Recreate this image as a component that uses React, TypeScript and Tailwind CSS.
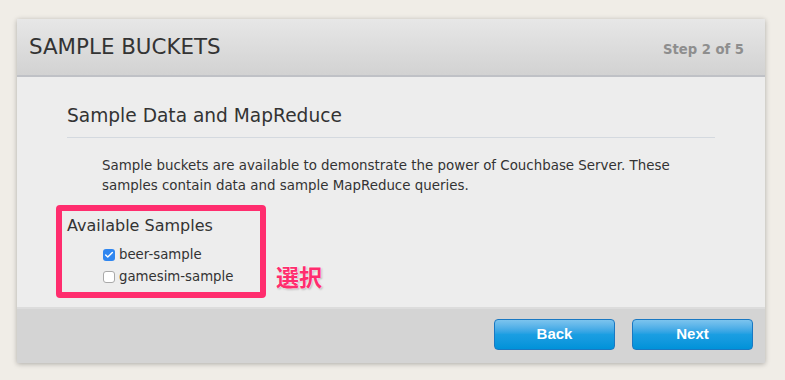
import { Check } from "lucide-react";

const font = { fontFamily: '"DejaVu Sans", Verdana, sans-serif' };

function Box({ checked }: { checked?: boolean }) {
  if (checked) {
    return (
      <span className="flex h-[12px] w-[12px] items-center justify-center rounded-[3px] bg-[#2f86f0]">
        <Check size={10} strokeWidth={3.5} className="text-white" />
      </span>
    );
  }
  return <span className="h-[12px] w-[12px] rounded-[3px] border border-[#a9a9a9] bg-white" />;
}

function Btn({ label }: { label: string }) {
  return (
    <button
      className="h-[31px] w-[121px] rounded-[4px] border border-[#1a78c2] bg-gradient-to-b from-[#7cc4ee] via-[#1a9ee2] to-[#0092d9] text-[15px] font-bold text-white"
      style={{ fontFamily: '"Liberation Sans", Arial, sans-serif' }}
    >
      {label}
    </button>
  );
}

export default function App() {
  return (
    <div className="h-[380px] w-[785px] bg-[#f0ede7] pl-[17px] pt-[19px]" style={font}>
      <div className="relative flex h-[344px] w-[748px] flex-col bg-[#ededed] shadow-[0_1px_5px_rgba(0,0,0,0.28)]">
        <div className="flex h-[58px] items-center justify-between border-b-2 border-[#bfc1c6] bg-gradient-to-b from-[#e7e7e7] to-[#d2d2d2] pl-[12px] pr-[21px]">
          <h1 className="pt-[1px] text-[21.4px] text-[#333]">SAMPLE BUCKETS</h1>
          <span className="pt-[5px] text-[13.2px] font-bold text-[#8e8e8e]">Step 2 of 5</span>
        </div>

        <div className="flex-1 px-[50px] pt-[25px]">
          <h2 className="border-b border-[#d4d9df] pb-[7px] text-[18.6px] text-[#333]">Sample Data and MapReduce</h2>
          <p className="mt-[18px] w-[610px] pl-[35px] text-[13.4px] leading-[20px] text-[#333]">
            Sample buckets are available to demonstrate the power of Couchbase Server. These samples contain data and
            sample MapReduce queries.
          </p>
          <h3 className="mt-[18px] text-[16px] text-[#333]">Available Samples</h3>
          <ul className="mt-[9px] flex flex-col gap-[6px] pl-[36px] text-[13.3px] text-[#333]">
            <li className="flex h-[16px] items-center gap-[4px]">
              <Box checked />
              beer-sample
            </li>
            <li className="flex h-[16px] items-center gap-[4px]">
              <Box />
              gamesim-sample
            </li>
          </ul>
        </div>

        <div className="flex h-[56px] items-center justify-end gap-[17px] border-t-2 border-[#dcdcdc] bg-[#d4d4d4] pb-[3px] pr-[12px]">
          <Btn label="Back" />
          <Btn label="Next" />
        </div>

        <div className="absolute left-[39px] top-[186px] h-[93px] w-[210px] rounded-[4px] border-[6px] border-[#ff2d6e]" />
        <span
          className="absolute left-[259px] top-[240px] text-[23px] font-bold text-[#ff2d6e]"
          style={{
            fontFamily: '"Noto Sans CJK JP", sans-serif',
            textShadow: "0 0 2px #fff, 0 0 2px #fff, 1px 1px 2px rgba(0,0,0,0.35)",
          }}
        >
          選択
        </span>
      </div>
    </div>
  );
}
